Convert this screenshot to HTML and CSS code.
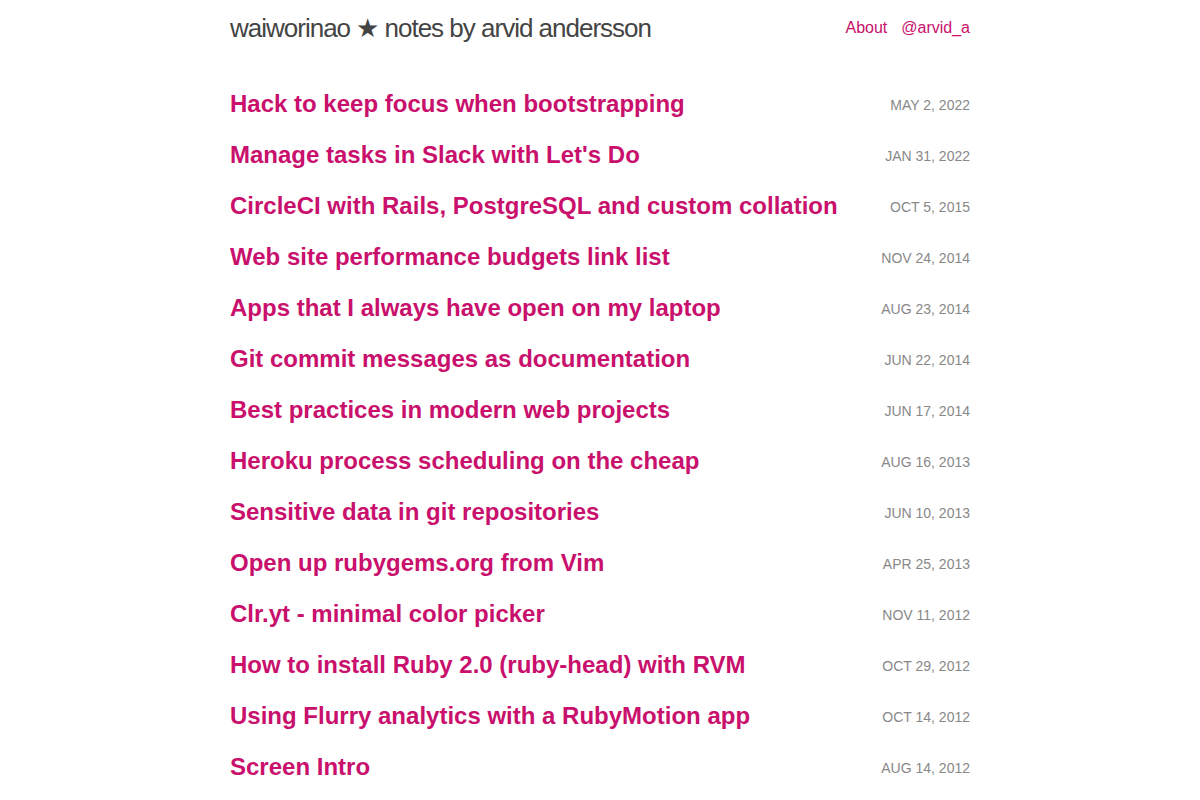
FILE: index.html
```html
<!DOCTYPE html>
<html lang="en">
<head>
    <meta charset="UTF-8">
    <meta name="viewport" content="width=device-width, initial-scale=1.0">
    <title>waiworinao ★ notes by arvid andersson</title>
    <link rel="stylesheet" href="styles.css">
</head>
<body>
    <div class="wrap">
        <header class="site-header">
            <a class="site-title" href="#">waiworinao ★ notes by arvid andersson</a>
            <nav class="site-nav">
                <a href="#">About</a>
                <a href="#">@arvid_a</a>
            </nav>
        </header>

        <ul class="posts">
            <li><a href="#">Hack to keep focus when bootstrapping</a><span class="date">May 2, 2022</span></li>
            <li><a href="#">Manage tasks in Slack with Let's Do</a><span class="date">Jan 31, 2022</span></li>
            <li><a href="#">CircleCI with Rails, PostgreSQL and custom collation</a><span class="date">Oct 5, 2015</span></li>
            <li><a href="#">Web site performance budgets link list</a><span class="date">Nov 24, 2014</span></li>
            <li><a href="#">Apps that I always have open on my laptop</a><span class="date">Aug 23, 2014</span></li>
            <li><a href="#">Git commit messages as documentation</a><span class="date">Jun 22, 2014</span></li>
            <li><a href="#">Best practices in modern web projects</a><span class="date">Jun 17, 2014</span></li>
            <li><a href="#">Heroku process scheduling on the cheap</a><span class="date">Aug 16, 2013</span></li>
            <li><a href="#">Sensitive data in git repositories</a><span class="date">Jun 10, 2013</span></li>
            <li><a href="#">Open up rubygems.org from Vim</a><span class="date">Apr 25, 2013</span></li>
            <li><a href="#">Clr.yt - minimal color picker</a><span class="date">Nov 11, 2012</span></li>
            <li><a href="#">How to install Ruby 2.0 (ruby-head) with RVM</a><span class="date">Oct 29, 2012</span></li>
            <li><a href="#">Using Flurry analytics with a RubyMotion app</a><span class="date">Oct 14, 2012</span></li>
            <li><a href="#">Screen Intro</a><span class="date">Aug 14, 2012</span></li>
        </ul>
    </div>
</body>
</html>
```

FILE: styles.css
```css
body { margin: 0; font-family: "Liberation Sans", Arial, sans-serif; color: #444; background: #fff; }
a { text-decoration: none; color: #c8106c; }
.wrap { max-width: 740px; margin: 0 auto; }

.site-header { display: flex; justify-content: space-between; align-items: center; padding: 12px 0 0; height: 32px; }
.site-title { color: #444; font-size: 26px; letter-spacing: -1px; }
.site-nav { display: flex; gap: 14px; font-size: 16px; }

.posts { list-style: none; margin: 34px 0 0; padding: 0; }
.posts li { display: flex; justify-content: space-between; align-items: center; height: 51px; }
.posts li a { font-size: 24px; font-weight: bold; }
.date { font-size: 14px; text-transform: uppercase; color: #888; margin-top: 2px; }
```
